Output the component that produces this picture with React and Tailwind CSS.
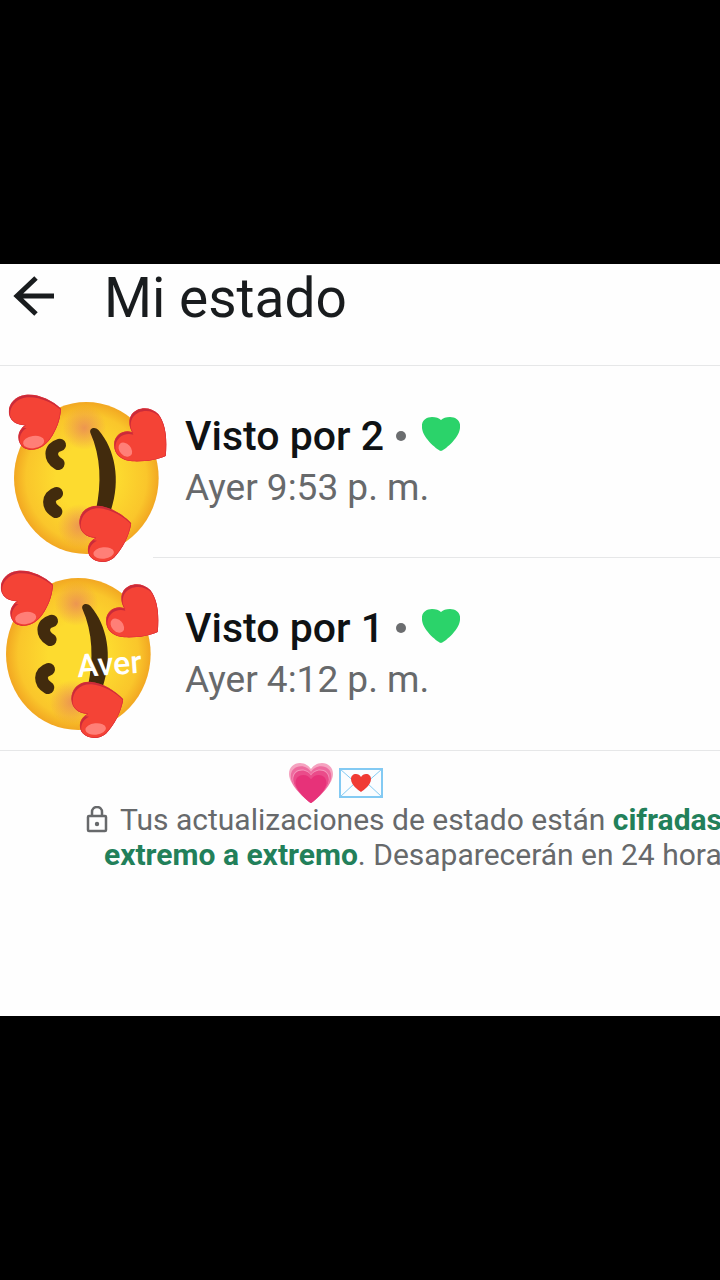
import React from 'react';

const statuses = [
    { id: 1, views: 'Visto por 2', time: 'Ayer 9:53 p. m.' },
    { id: 2, views: 'Visto por 1', time: 'Ayer 4:12 p. m.', caption: 'Aver' },
];

const faceHearts = [
    {
        d: 'M186 86C160 60 115 40 80 44C45 49 25 75 30 103C35 127 60 137 79 136C54 150 50 186 74 203C100 218 135 205 155 175C172 150 184 120 186 86Z',
        shine: { cx: 104, cy: 186, rx: 32, ry: 18, angle: -8 },
    },
    {
        d: 'M500 228C506 180 500 130 478 102C455 78 415 80 398 103C387 120 390 140 399 156C372 148 345 165 345 195C345 225 370 242 400 244C435 246 475 240 500 228Z',
        shine: { cx: 379, cy: 209, rx: 24, ry: 17, angle: 48 },
    },
    {
        d: 'M397 430C375 405 335 380 298 377C262 375 240 400 241 430C243 458 262 472 290 474C265 485 260 515 275 532C292 550 325 550 345 533C370 508 390 470 397 430Z',
        shine: { cx: 314, cy: 519, rx: 31, ry: 17, angle: -6 },
    },
];

const FaceWithHearts = ({ id }) => (
    <svg viewBox="27 42 477 507" className="block h-[169px] w-[159px]" aria-hidden="true">
        <defs>
            <radialGradient id={`face-${id}`} cx="50%" cy="50%" r="52%">
                <stop offset="0.4" stopColor="#fddb2f" />
                <stop offset="0.8" stopColor="#fac62b" />
                <stop offset="1" stopColor="#f0a020" />
            </radialGradient>
            <radialGradient id={`blush-${id}`}>
                <stop offset="0" stopColor="#e8835c" stopOpacity="0.75" />
                <stop offset="1" stopColor="#e8835c" stopOpacity="0" />
            </radialGradient>
            {faceHearts.map((heart, i) => (
                <clipPath key={i} id={`heart-${id}-${i}`}>
                    <path d={heart.d} />
                </clipPath>
            ))}
        </defs>
        <ellipse cx="262" cy="294" rx="217" ry="228" fill={`url(#face-${id})`} />
        <circle cx="256" cy="144" r="66" fill={`url(#blush-${id})`} />
        <circle cx="242" cy="438" r="66" fill={`url(#blush-${id})`} />
        <g fill="none" stroke="#422b0d" strokeWidth="38" strokeLinecap="round" strokeLinejoin="round">
            <path d="M182 195C150 204 152 236 178 251" />
            <path d="M173 340C144 349 145 380 171 395" />
        </g>
        <path
            d="M274 158C270 146 287 138 299 151C348 208 366 300 336 390L291 390C308 310 306 230 274 158Z"
            fill="#422b0d"
        />
        {faceHearts.map((heart, i) => (
            <g key={i} clipPath={`url(#heart-${id}-${i})`}>
                <path d={heart.d} fill="#c92b3a" />
                <path d={heart.d} fill="#f44336" transform="translate(4 8)" />
                <path d={heart.d} fill="none" stroke="#dc3038" strokeWidth="4" />
                <ellipse
                    cx={heart.shine.cx}
                    cy={heart.shine.cy}
                    rx={heart.shine.rx}
                    ry={heart.shine.ry}
                    fill="#ff7f77"
                    transform={`rotate(${heart.shine.angle} ${heart.shine.cx} ${heart.shine.cy})`}
                />
            </g>
        ))}
    </svg>
);

const GreenHeart = () => (
    <svg viewBox="0 0 38 34" className="h-[34px] w-[38px]" aria-hidden="true">
        <path
            d="M19 34C17 34 1 22 0 11C-1 4 4 0 10 0C14 0 17 1 19 3C21 1 24 0 28 0C34 0 39 4 38 11C37 22 21 34 19 34Z"
            fill="#2bd36a"
        />
    </svg>
);

const GrowingHeart = () => {
    const d = 'M22 41C19 39 0 24 0 12C0 5 5 1 11 1C16 1 20 4 22 7C24 4 28 1 33 1C39 1 44 5 44 12C44 24 25 39 22 41Z';
    return (
        <svg viewBox="0 0 44 42" className="h-[42px] w-[44px] shrink-0" aria-hidden="true">
            <path d={d} fill="#f5a3c0" />
            <path d={d} fill="#ee6b9f" transform="translate(1.8 3.4) scale(0.92)" />
            <path d={d} fill="#f595ba" transform="translate(3.5 6.6) scale(0.84)" />
            <path d={d} fill="#ea4c8a" transform="translate(4.2 7.8) scale(0.81)" />
            <path d={d} fill="#e73279" transform="translate(6.6 12.3) scale(0.7)" />
        </svg>
    );
};

const LoveLetter = () => (
    <svg viewBox="0 0 44 30" className="h-[30px] w-[44px] shrink-0" aria-hidden="true">
        <rect x="1" y="1" width="42" height="28" fill="#fbfdff" stroke="#83caf3" strokeWidth="2" />
        <path d="M1 1L18 16Q22 19 26 16L43 1M1 29L16 15M43 29L28 15" fill="none" stroke="#83caf3" strokeWidth="1" />
        <path
            d="M22 24C19 22 12 17 12 11C12 8 14 6 17 6C19 6 21 7 22 9C23 7 25 6 27 6C30 6 32 8 32 11C32 17 25 22 22 24Z"
            fill="#f03a34"
        />
    </svg>
);

const LockIcon = () => (
    <svg viewBox="0 0 22 28" className="h-[28px] w-[22px] shrink-0" fill="none" stroke="#67696b" strokeWidth="2.5" aria-hidden="true">
        <rect x="2" y="10" width="18" height="15" rx="1" />
        <path d="M6 10V6A5 5 0 0 1 16 6V10" />
        <circle cx="11" cy="18" r="2.2" fill="#67696b" stroke="none" />
    </svg>
);

const StatusRow = ({ status }) => (
    <li className="flex h-48 items-start">
        <div className={status.caption ? 'relative w-[185px] shrink-0 pt-3' : 'relative w-[185px] shrink-0 pt-7 pl-2'}>
            <FaceWithHearts id={status.id} />
            {status.caption && (
                <span className="absolute top-[88px] left-[77px] -rotate-4 text-[32px] leading-9 font-medium text-white">
                    {status.caption}
                </span>
            )}
        </div>
        <div
            className={
                status.caption
                    ? 'h-full flex-1 pt-[46px]'
                    : '-ml-8 h-full flex-1 border-b border-[#e6e7e8] pt-[46px] pl-8'
            }
        >
            <div className="flex h-12 items-center">
                <h2 className="min-w-[198px] text-[41px] leading-12 font-medium text-[#0f1214]">{status.views}</h2>
                <span className="ml-3 size-[10px] rounded-full bg-[#6b6d6f]" />
                <span className="ml-4 pb-1">
                    <GreenHeart />
                </span>
            </div>
            <p className="text-[37px] leading-14 text-[#67696b]">{status.time}</p>
        </div>
    </li>
);

const App = () => {
    return (
        <div className="flex min-h-screen flex-col justify-center overflow-hidden bg-black font-['Roboto',sans-serif]">
            <main className="bg-[#fefefe] pb-36">
                <header className="flex items-start border-b border-[#e6e7e8] pt-[2px] pb-[35px] pl-3">
                    <button type="button" aria-label="Volver" className="mt-[10px] mr-12">
                        <svg viewBox="0 0 44 40" className="h-[40px] w-[44px]" fill="none" stroke="#191c1e" strokeWidth="5" aria-hidden="true">
                            <path d="M42 20H6M24 2L5 20L24 38" />
                        </svg>
                    </button>
                    <h1 className="text-[55px] leading-16 text-[#191c1e]">Mi estado</h1>
                </header>

                <ul className="border-b border-[#e6e7e8]">
                    {statuses.map((status) => (
                        <StatusRow key={status.id} status={status} />
                    ))}
                </ul>

                <footer className="pt-3 text-[30px] leading-[35px] whitespace-nowrap text-[#67696b]">
                    <div className="flex h-[39px] items-center gap-[6px] pl-[289px]">
                        <GrowingHeart />
                        <LoveLetter />
                    </div>
                    <div className="flex items-center gap-3 pl-[86px]">
                        <LockIcon />
                        <p>
                            Tus actualizaciones de estado están{' '}
                            <a href="#cifrado" className="font-bold text-[#22805a]">cifradas</a>
                        </p>
                    </div>
                    <p className="pl-26">
                        <a href="#cifrado" className="font-bold text-[#22805a]">extremo a extremo</a>. Desaparecerán en 24 hora
                    </p>
                </footer>
            </main>
        </div>
    );
};

export default App;
